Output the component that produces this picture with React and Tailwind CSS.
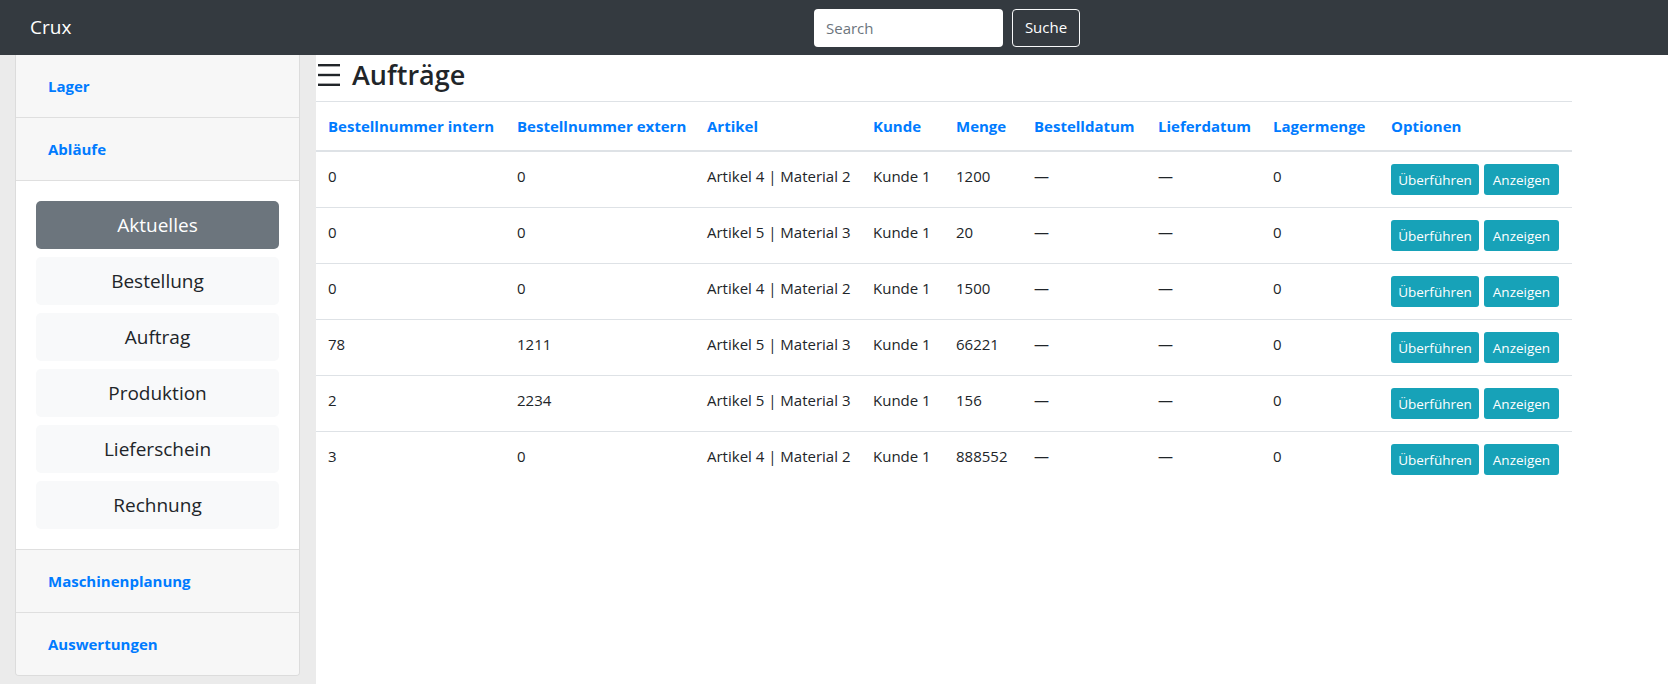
import React from 'react'

const columns = [
  { label: 'Bestellnummer intern', w: 'w-[189px]' },
  { label: 'Bestellnummer extern', w: 'w-[190px]' },
  { label: 'Artikel', w: 'w-[166px]' },
  { label: 'Kunde', w: 'w-[83px]' },
  { label: 'Menge', w: 'w-[78px]' },
  { label: 'Bestelldatum', w: 'w-[124px]' },
  { label: 'Lieferdatum', w: 'w-[115px]' },
  { label: 'Lagermenge', w: 'w-[118px]' },
  { label: 'Optionen', w: 'w-[193px]' },
]

const orders = [
  { intern: '0', extern: '0', artikel: 'Artikel 4 | Material 2', kunde: 'Kunde 1', menge: '1200' },
  { intern: '0', extern: '0', artikel: 'Artikel 5 | Material 3', kunde: 'Kunde 1', menge: '20' },
  { intern: '0', extern: '0', artikel: 'Artikel 4 | Material 2', kunde: 'Kunde 1', menge: '1500' },
  { intern: '78', extern: '1211', artikel: 'Artikel 5 | Material 3', kunde: 'Kunde 1', menge: '66221' },
  { intern: '2', extern: '2234', artikel: 'Artikel 5 | Material 3', kunde: 'Kunde 1', menge: '156' },
  { intern: '3', extern: '0', artikel: 'Artikel 4 | Material 2', kunde: 'Kunde 1', menge: '888552' },
]

const abläufe = ['Bestellung', 'Auftrag', 'Produktion', 'Lieferschein', 'Rechnung']

function SectionHeader({ label, last }) {
  return (
    <div
      className={`bg-[#f7f7f7] flex items-center pl-[32px] ${
        last ? 'h-[62px]' : 'h-[63px] border-b border-[#dfdfdf]'
      }`}
    >
      <span className="text-[15px] font-bold text-[#007bff]">{label}</span>
    </div>
  )
}

function Sidebar() {
  return (
    <aside className="w-[316px] shrink-0 bg-[#ebebeb] pl-[15px] pr-[16px]">
      <div className="border border-t-0 border-[#dcdcdc] rounded-b-[4px] overflow-hidden">
        <SectionHeader label="Lager" />
        <SectionHeader label="Abläufe" />
        <div className="bg-white px-5 pt-5 pb-5 flex flex-col gap-2 border-b border-[#dfdfdf]">
          <div className="h-[48px] rounded-[5px] bg-[#6c757d] text-white text-[19px] flex items-center justify-center">
            Aktuelles
          </div>
          {abläufe.map((item) => (
            <div
              key={item}
              className="h-[48px] rounded-[5px] bg-[#f8f9fa] text-[#212529] text-[19px] flex items-center justify-center"
            >
              {item}
            </div>
          ))}
        </div>
        <SectionHeader label="Maschinenplanung" />
        <SectionHeader label="Auswertungen" last />
      </div>
    </aside>
  )
}

function MenuIcon() {
  return (
    <svg className="w-[22px] h-[22px]" viewBox="0 0 22 22" fill="#212529">
      <rect x="0" y="0" width="22" height="2.4" />
      <rect x="0" y="9.8" width="22" height="2.4" />
      <rect x="0" y="19.6" width="22" height="2.4" />
    </svg>
  )
}

export default function App() {
  return (
    <div className="h-screen overflow-hidden flex flex-col font-['Open_Sans',sans-serif] text-[#212529]">
      <nav className="h-[55px] shrink-0 bg-[#343a40] flex items-center pl-[30px]">
        <span className="text-white text-[19px]">Crux</span>
        <div className="ml-auto mr-[588px] flex items-center gap-[9px]">
          <input
            placeholder="Search"
            className="w-[189px] h-[38px] rounded-[4px] bg-white px-3 text-[15px] text-[#495057] placeholder:text-[#6c757d] outline-none"
          />
          <button className="w-[68px] h-[38px] rounded-[4px] border border-[#f8f9fa] text-white text-[15px]">
            Suche
          </button>
        </div>
      </nav>

      <div className="flex flex-1 min-h-0">
        <Sidebar />

        <main className="flex-1 bg-white">
          <div className="h-[46px] pt-[3px] flex items-start">
            <h3 className="h-[34px] flex items-center gap-[12px] pl-[2px] text-[27px] font-semibold leading-[34px]">
              <MenuIcon />
              Aufträge
            </h3>
          </div>

          <table className="w-[1256px] table-fixed">
            <colgroup>
              {columns.map((c) => (
                <col key={c.label} className={c.w} />
              ))}
            </colgroup>
            <thead>
              <tr>
                {columns.map((c) => (
                  <th
                    key={c.label}
                    className="px-3 py-3 text-left align-bottom text-[15px] leading-6 font-bold text-[#007bff] whitespace-nowrap border-t border-b-2 border-[#dee2e6]"
                  >
                    {c.label}
                  </th>
                ))}
              </tr>
            </thead>
            <tbody>
              {orders.map((o, i) => (
                <tr key={i} className="text-[15px] leading-6">
                  <td className="px-3 py-3 align-top border-t border-[#dee2e6]">{o.intern}</td>
                  <td className="px-3 py-3 align-top border-t border-[#dee2e6]">{o.extern}</td>
                  <td className="px-3 py-3 align-top border-t border-[#dee2e6] whitespace-nowrap">{o.artikel}</td>
                  <td className="px-3 py-3 align-top border-t border-[#dee2e6] whitespace-nowrap">{o.kunde}</td>
                  <td className="px-3 py-3 align-top border-t border-[#dee2e6]">{o.menge}</td>
                  <td className="px-3 py-3 align-top border-t border-[#dee2e6]">—</td>
                  <td className="px-3 py-3 align-top border-t border-[#dee2e6]">—</td>
                  <td className="px-3 py-3 align-top border-t border-[#dee2e6]">0</td>
                  <td className="px-3 py-3 align-top border-t border-[#dee2e6]">
                    <div className="flex gap-[5px]">
                      <button className="w-[88px] h-[31px] rounded-[3px] bg-[#17a2b8] text-white text-[13.5px]">
                        Überführen
                      </button>
                      <button className="w-[75px] h-[31px] rounded-[3px] bg-[#17a2b8] text-white text-[13.5px]">
                        Anzeigen
                      </button>
                    </div>
                  </td>
                </tr>
              ))}
            </tbody>
          </table>
        </main>
      </div>
    </div>
  )
}
